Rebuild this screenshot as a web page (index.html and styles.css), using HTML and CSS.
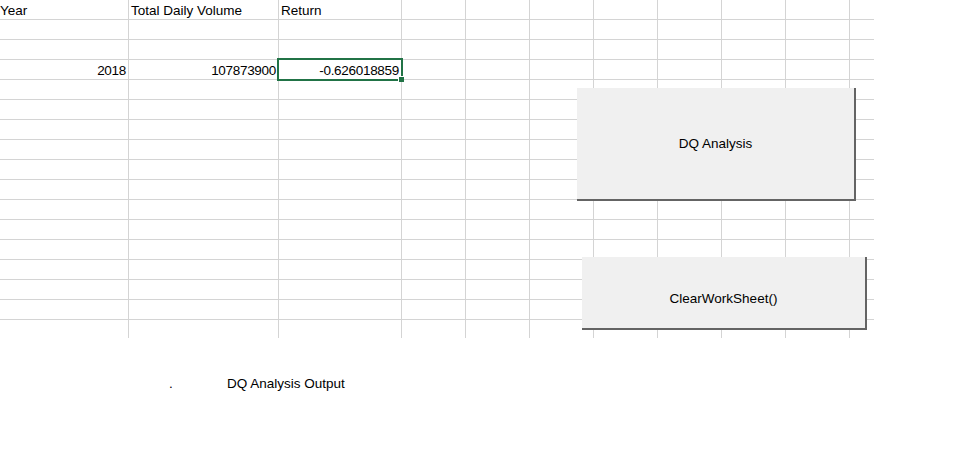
FILE: index.html
```html
<!DOCTYPE html>
<html lang="en">
<head>
  <meta charset="UTF-8" />
  <title>DQ Analysis</title>
  <link rel="stylesheet" href="styles.css">
</head>
<body>
  <div class="page">
    <div class="sheet" id="sheet"></div>

    <button class="macro-btn btn-analysis">DQ Analysis</button>
    <button class="macro-btn btn-clear">ClearWorkSheet()</button>

    <div class="output">
      <span class="dot">.</span>
      <span class="output-label">DQ Analysis Output</span>
    </div>
  </div>

  <script>
    const colCount = 11;
    const rowCount = 17;
    const values = {
      '0,0': { text: 'Year' },
      '0,1': { text: 'Total Daily Volume' },
      '0,2': { text: 'Return' },
      '3,0': { text: '2018', num: true },
      '3,1': { text: '107873900', num: true },
      '3,2': { text: '-0.626018859', num: true, active: true }
    };

    const sheet = document.getElementById('sheet');
    for (let r = 0; r < rowCount; r++) {
      for (let c = 0; c < colCount; c++) {
        const cell = document.createElement('div');
        cell.className = 'cell';
        if (c === colCount - 1) cell.classList.add('edge');
        if (r === rowCount - 1) cell.classList.add('last-row');
        const v = values[r + ',' + c];
        if (v) {
          cell.textContent = v.text;
          if (v.num) cell.classList.add('num');
          if (v.active) cell.classList.add('active');
        }
        sheet.appendChild(cell);
      }
    }
  </script>
</body>
</html>
```

FILE: styles.css
```css
body {
  margin: 0;
  background-color: #ffffff;
  color: #000000;
  font-family: 'Liberation Sans', Arial, sans-serif;
  font-size: 13.5px;
  overflow: hidden;
}

.page {
  position: relative;
  width: 969px;
  height: 469px;
}

.sheet {
  display: grid;
  grid-template-columns: 129px 150px 123px repeat(7, 64px) 24px;
  grid-auto-rows: 20px;
  width: 874px;
}

.cell {
  box-sizing: border-box;
  border-right: 1px solid #d4d4d4;
  border-bottom: 1px solid #d4d4d4;
  display: flex;
  align-items: flex-end;
  padding: 0 2px 1px 2px;
  line-height: 15px;
  white-space: nowrap;
  overflow: visible;
}

.cell:nth-child(11n + 1) {
  padding-left: 0;
}

.cell.edge {
  border-right: none;
}

.cell.last-row {
  border-bottom: none;
  height: 18px;
}

.cell.num {
  justify-content: flex-end;
  letter-spacing: -0.3px;
}

.cell.active {
  position: relative;
}

.cell.active::after {
  content: '';
  position: absolute;
  top: -2px;
  left: -2px;
  right: -2px;
  bottom: -2px;
  border: 2px solid #217346;
}

.cell.active::before {
  content: '';
  position: absolute;
  right: -3px;
  bottom: -3px;
  width: 5px;
  height: 5px;
  background-color: #217346;
  border-left: 1px solid #ffffff;
  border-top: 1px solid #ffffff;
  z-index: 1;
}

.macro-btn {
  position: absolute;
  box-sizing: border-box;
  margin: 0;
  padding: 0;
  background-color: #f0f0f0;
  border: none;
  border-right: 2px solid #646464;
  border-bottom: 2px solid #646464;
  font-family: 'Liberation Sans', Arial, sans-serif;
  font-size: 13.5px;
  color: #000000;
}

.btn-analysis {
  left: 577px;
  top: 88px;
  width: 279px;
  height: 113px;
}

.btn-clear {
  left: 582px;
  top: 257px;
  width: 285px;
  height: 73px;
  padding-top: 12px;
}

.output {
  display: flex;
  align-items: baseline;
  padding: 36px 0 0 169px;
  line-height: 15px;
}

.dot {
  width: 58px;
}
```
